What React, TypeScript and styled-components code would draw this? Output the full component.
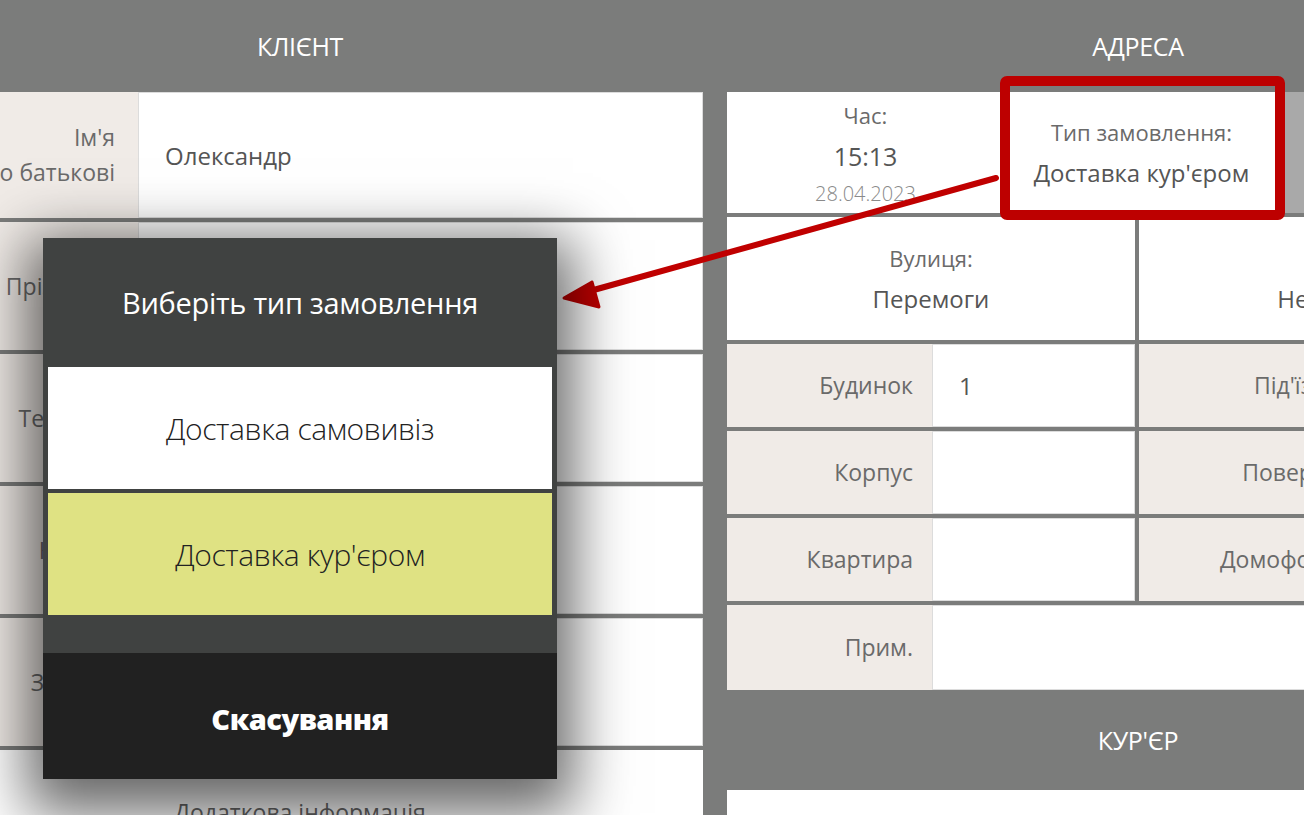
import React from "react";
import styled, { createGlobalStyle } from "styled-components";

const Global = createGlobalStyle`
  html, body { margin: 0; padding: 0; }
  body {
    background: #7b7c7b;
    overflow: hidden;
    font-family: "Open Sans", "Noto Sans", "DejaVu Sans", sans-serif;
  }
`;

const GRAY = "#7b7c7b";

const Viewport = styled.div`
  position: relative;
  width: 1304px;
  height: 815px;
  overflow: hidden;
  background: ${GRAY};
`;

const Page = styled.div`
  display: flex;
  gap: 24px;
  margin-left: -103px;
  height: 815px;
`;

const Column = styled.div<{ $w: number }>`
  flex: 0 0 ${(p) => p.$w}px;
  width: ${(p) => p.$w}px;
  display: flex;
  flex-direction: column;
`;

const SectionHeader = styled.div<{ $h: number }>`
  height: ${(p) => p.$h}px;
  flex: 0 0 ${(p) => p.$h}px;
  display: flex;
  align-items: center;
  justify-content: center;
  color: #ffffff;
  font-size: 25px;
  letter-spacing: -0.3px;
  background: ${GRAY};
`;

const Stack = styled.div`
  display: flex;
  flex-direction: column;
  gap: 4px;
  background: ${GRAY};
`;

const FieldRow = styled.div<{ $h: number }>`
  display: flex;
  height: ${(p) => p.$h}px;
  flex: 0 0 ${(p) => p.$h}px;
`;

const Label = styled.div<{ $w: number; $pr?: number }>`
  flex: 0 0 ${(p) => p.$w}px;
  width: ${(p) => p.$w}px;
  box-sizing: border-box;
  background: #f0ebe7;
  color: #6a6a6a;
  font-size: 23px;
  line-height: 35px;
  display: flex;
  flex-direction: column;
  justify-content: center;
  align-items: flex-end;
  padding-right: ${(p) => p.$pr ?? 19}px;
  white-space: nowrap;
  overflow: hidden;
`;

const ValueBox = styled.div`
  flex: 1;
  box-sizing: border-box;
  background: #ffffff;
  border: 1px solid #dcdcdc;
  color: #555;
  font-size: 24px;
  display: flex;
  align-items: center;
  padding-left: 26px;
`;

const WideRow = styled.div`
  flex: 1;
  background: #ffffff;
  color: #666;
  font-size: 23px;
  text-align: center;
  padding-top: 46px;
`;

const Cell = styled.div<{ $w?: number; $bg?: string }>`
  ${(p) => (p.$w ? `flex: 0 0 ${p.$w}px; width: ${p.$w}px;` : "flex: 1;")}
  background: ${(p) => p.$bg || "#ffffff"};
  display: flex;
  flex-direction: column;
  align-items: center;
  justify-content: center;
  color: #666;
  overflow: hidden;
  white-space: nowrap;
`;

const CellLabel = styled.div`
  font-size: 22px;
  line-height: 40px;
  color: #6a6a6a;
`;

const CellValue = styled.div<{ $strong?: boolean }>`
  font-size: ${(p) => (p.$strong ? 25 : 24)}px;
  line-height: 42px;
  color: #555;
`;

const CellDate = styled.div`
  font-size: 20px;
  font-weight: 300;
  line-height: 34px;
  color: #8a8a8a;
`;

const Half = styled.div<{ $gapLeft?: boolean }>`
  flex: 0 0 408px;
  display: flex;
  margin-left: ${(p) => (p.$gapLeft ? 4 : 0)}px;
`;

const Dialog = styled.div`
  position: absolute;
  left: 43px;
  top: 238px;
  width: 514px;
  height: 541px;
  background: #404241;
  display: flex;
  flex-direction: column;
  box-shadow: 0 18px 55px 16px rgba(0, 0, 0, 0.6);
`;

const DialogTitle = styled.div`
  height: 128px;
  flex: 0 0 128px;
  display: flex;
  align-items: center;
  justify-content: center;
  color: #ffffff;
  font-size: 29px;
  letter-spacing: -0.3px;
`;

const Options = styled.div`
  display: flex;
  flex-direction: column;
  gap: 4px;
  padding: 1px 5px 0;
`;

const Option = styled.div<{ $selected?: boolean }>`
  height: 122px;
  display: flex;
  align-items: center;
  justify-content: center;
  background: ${(p) => (p.$selected ? "#dfe283" : "#ffffff")};
  color: #222;
  font-size: 30px;
  font-weight: 300;
  letter-spacing: -0.4px;
`;

const Spacer = styled.div`
  height: 38px;
  flex: 0 0 38px;
`;

const CancelButton = styled.div`
  flex: 1;
  background: #212121;
  display: flex;
  align-items: center;
  justify-content: center;
  color: #ffffff;
  font-size: 29px;
  font-weight: 800;
  letter-spacing: -0.5px;
  padding-top: 4px;
`;

const Highlight = styled.div`
  position: absolute;
  left: 1000px;
  top: 76px;
  width: 285px;
  height: 144px;
  box-sizing: border-box;
  border: 10px solid #bd0000;
  border-radius: 7px;
  pointer-events: none;
`;

const ArrowLayer = styled.svg`
  position: absolute;
  left: 0;
  top: 0;
  width: 1304px;
  height: 815px;
  pointer-events: none;
`;

function AddrPair({ a, av, b }: { a: string; av?: string; b: string }) {
  return (
    <FieldRow $h={83}>
      <Half>
        <Label $w={205}>{a}</Label>
        <ValueBox>{av}</ValueBox>
      </Half>
      <Half $gapLeft>
        <Label $w={205}>{b}</Label>
        <ValueBox />
      </Half>
    </FieldRow>
  );
}

export default function App() {
  return (
    <>
      <Global />
      <Viewport>
        <Page>
          <Column $w={806}>
            <SectionHeader $h={92}>КЛІЄНТ</SectionHeader>
            <Stack style={{ flex: 1 }}>
              <FieldRow $h={126}>
                <Label $w={241} $pr={23}>
                  <span>Ім'я</span>
                  <span>По батькові</span>
                </Label>
                <ValueBox>Олександр</ValueBox>
              </FieldRow>
              <FieldRow $h={128}>
                <Label $w={241} $pr={23}>Прізвище</Label>
                <ValueBox />
              </FieldRow>
              <FieldRow $h={128}>
                <Label $w={241} $pr={23}>Телефон</Label>
                <ValueBox />
              </FieldRow>
              <FieldRow $h={128}>
                <Label $w={241} $pr={23}>Картка</Label>
                <ValueBox />
              </FieldRow>
              <FieldRow $h={128}>
                <Label $w={241} $pr={23}>Знижка</Label>
                <ValueBox />
              </FieldRow>
              <WideRow>Додаткова інформація</WideRow>
            </Stack>
          </Column>

          <Column $w={822}>
            <SectionHeader $h={92}>АДРЕСА</SectionHeader>
            <Stack>
              <FieldRow $h={121} style={{ gap: 4 }}>
                <Cell $w={277}>
                  <CellLabel>Час:</CellLabel>
                  <CellValue $strong>15:13</CellValue>
                  <CellDate>28.04.2023</CellDate>
                </Cell>
                <Cell $w={267}>
                  <CellLabel>Тип замовлення:</CellLabel>
                  <CellValue>Доставка кур'єром</CellValue>
                </Cell>
                <Cell $bg="#a9a9a9" />
              </FieldRow>
              <FieldRow $h={123} style={{ gap: 4 }}>
                <Cell $w={408}>
                  <CellLabel>Вулиця:</CellLabel>
                  <CellValue>Перемоги</CellValue>
                </Cell>
                <Cell $w={408}>
                  <CellLabel>Район:</CellLabel>
                  <CellValue>Не вказано</CellValue>
                </Cell>
              </FieldRow>
              <AddrPair a="Будинок" av="1" b="Під'їзд" />
              <AddrPair a="Корпус" b="Поверх" />
              <AddrPair a="Квартира" b="Домофон" />
              <FieldRow $h={85}>
                <Label $w={205}>Прим.</Label>
                <ValueBox />
              </FieldRow>
            </Stack>
            <SectionHeader $h={100}>КУР'ЄР</SectionHeader>
            <WideRow />
          </Column>
        </Page>

        <Highlight />
        <ArrowLayer viewBox="0 0 1304 815">
          <line x1="996" y1="178" x2="590" y2="291" stroke="#c00000" strokeWidth="6" strokeLinecap="round" />
          <polygon points="564,298 599,307 592,282" fill="#c00000" stroke="#c00000" strokeWidth="3" strokeLinejoin="round" />
        </ArrowLayer>

        <Dialog>
          <DialogTitle>Виберіть тип замовлення</DialogTitle>
          <Options>
            <Option>Доставка самовивіз</Option>
            <Option $selected>Доставка кур'єром</Option>
          </Options>
          <Spacer />
          <CancelButton>Скасування</CancelButton>
        </Dialog>
      </Viewport>
    </>
  );
}
